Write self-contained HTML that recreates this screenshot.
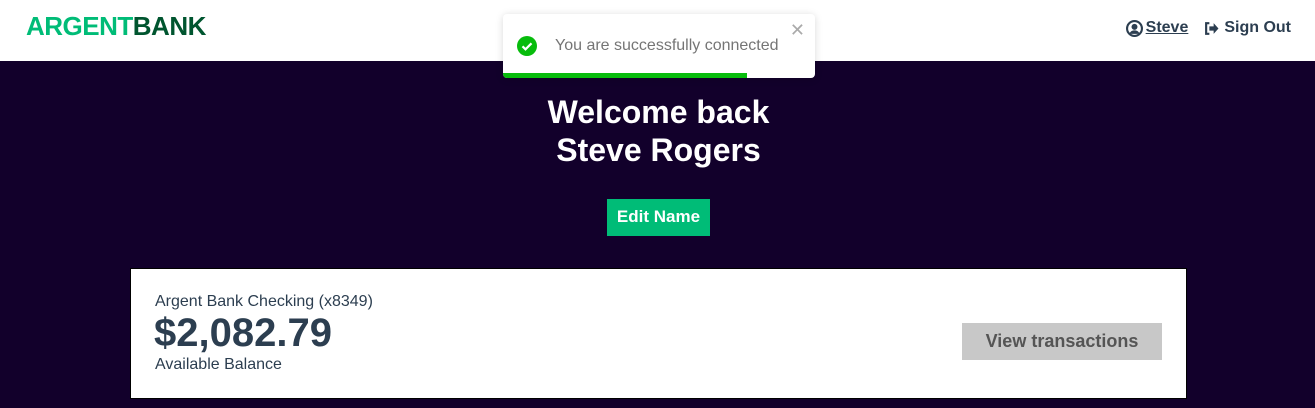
<!DOCTYPE html>
<html><head><style>
*{margin:0;padding:0;box-sizing:border-box}
body{width:1315px;height:408px;overflow:hidden;background:#12002b;font-family:"Liberation Sans",sans-serif;position:relative}
nav{position:absolute;left:0;top:0;width:1315px;height:61px;background:#fff}
.logo{position:absolute;left:26px;top:11px;font-size:26px;font-weight:bold;letter-spacing:-0.5px}
.logo .a{color:#00bc77}.logo .b{color:#00552f}
.links{position:absolute;right:24px;top:19px;font-size:16px;font-weight:bold;color:#2c3e50;display:flex;align-items:center}
.links span{display:flex;align-items:center}
.toast{position:absolute;left:503px;top:14px;width:312px;height:64px;background:#fff;border-radius:4px;box-shadow:0 1px 8px rgba(0,0,0,.15);overflow:hidden}
.toast .msg{position:absolute;left:52px;top:23px;font-size:16px;color:#757575}
.toast .x{position:absolute;right:10px;top:6px;color:#aaa;font-size:18px}
.toast .bar{position:absolute;left:0;bottom:0;height:5px;width:244px;background:#07bc0c}
h1{position:absolute;left:0;width:1315px;top:93px;text-align:center;color:#fff;font-size:32px;line-height:38px;padding-left:2px}
.edit{position:absolute;left:607px;top:199px;width:103px;height:37px;background:#00bc77;color:#fff;font-weight:bold;font-size:17px;text-align:center;line-height:36px}
.card{position:absolute;left:130px;top:268px;width:1057px;height:131px;background:#fff;border:1px solid #000;color:#2c3e50}
.t{position:absolute;left:24px;top:24px;font-size:16px}
.amt{position:absolute;left:23px;top:42px;font-size:40px;font-weight:bold}
.ab{position:absolute;left:24px;top:87px;font-size:16px}
.vt{position:absolute;left:831px;top:54px;width:200px;height:37px;background:#c8c8c8;color:#555;font-weight:bold;font-size:18px;text-align:center;line-height:36px}
</style></head><body>
<nav>
<div class="logo"><span class="a">ARGENT</span><span class="b">BANK</span></div>
<div class="links">
<span><svg width="17" height="17" viewBox="0 0 16 16"><circle cx="8" cy="8" r="7" fill="none" stroke="#2c3e50" stroke-width="2"/><circle cx="8" cy="6.5" r="2.8" fill="#2c3e50"/><path d="M3.2 13c1-2.6 3-3.2 4.8-3.2s3.8.6 4.8 3.2" fill="#2c3e50"/></svg><u style="margin-left:3px">Steve</u></span>
<span style="margin-left:16px"><svg width="15" height="15" viewBox="0 0 14 14"><path d="M5 2H2v10h3" fill="none" stroke="#2c3e50" stroke-width="2"/><path d="M5 5h4V2l4.5 5L9 12V9H5z" fill="#2c3e50"/></svg><span style="margin-left:5px">Sign Out</span></span>
</div>
</nav>
<div class="toast">
<svg style="position:absolute;left:14px;top:22px" width="20" height="20" viewBox="0 0 20 20"><circle cx="10" cy="10" r="10" fill="#07bc0c"/><path d="M5.5 10.3l3 3 6-6" fill="none" stroke="#fff" stroke-width="2.2"/></svg>
<div class="msg">You are successfully connected</div><div class="x">✕</div><div class="bar"></div></div>
<h1>Welcome back<br>Steve Rogers</h1>
<div class="edit">Edit Name</div>
<div class="card"><div class="t">Argent Bank Checking (x8349)</div><div class="amt">$2,082.79</div><div class="ab">Available Balance</div><div class="vt">View transactions</div></div>
</body></html>
